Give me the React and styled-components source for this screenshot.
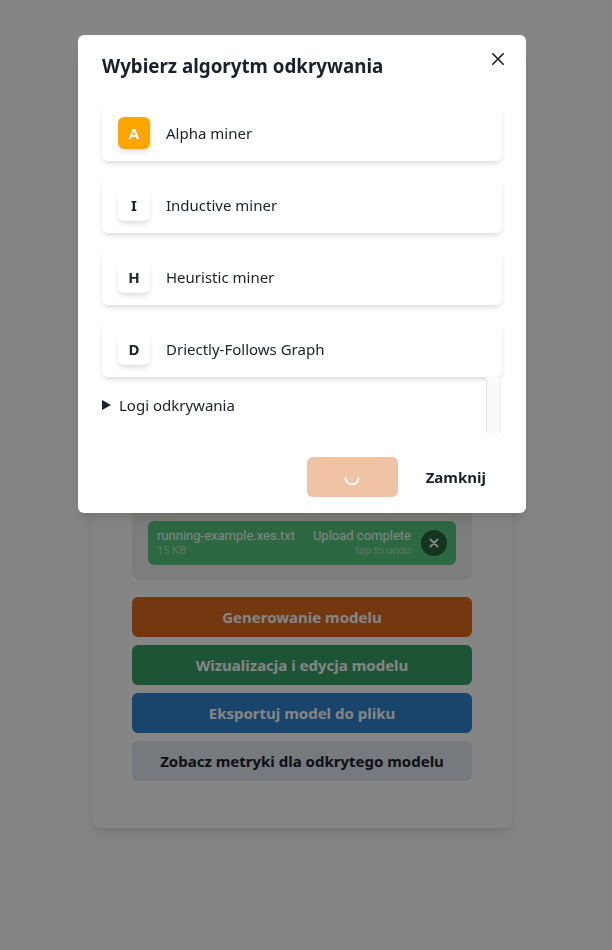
import React from "react";
import styled, { createGlobalStyle } from "styled-components";

const Global = createGlobalStyle`
  html, body { margin: 0; padding: 0; }
  body {
    font-family: "Noto Sans", "Open Sans", sans-serif;
    color: #1a202c;
    background: #ffffff;
  }
  * { box-sizing: border-box; }
`;

/* ---------- background page ---------- */
const Page = styled.div`
  min-height: 950px;
  padding: 380px 8px 0 0;
  display: flex;
  justify-content: center;
  align-items: flex-start;
  background: #ffffff;
`;

const Card = styled.div`
  width: 420px;
  padding: 40px 40px 47px;
  background: #ffffff;
  border-radius: 8px;
  box-shadow: 0 10px 15px -3px rgba(0, 0, 0, 0.1), 0 4px 6px -2px rgba(0, 0, 0, 0.05);
  display: flex;
  flex-direction: column;
`;

const UploadPanel = styled.div`
  background: #f1f0ef;
  border-radius: 8px;
  padding: 16px 16px 15px;
  display: flex;
  flex-direction: column;
`;

const DropLabel = styled.div`
  height: 85px;
  display: flex;
  align-items: center;
  justify-content: center;
  font-size: 14px;
  color: #4f4f4f;
`;

const FileItem = styled.div`
  height: 44px;
  background: #55c87f;
  border-radius: 6px;
  color: #ffffff;
  display: flex;
  align-items: center;
  padding: 0 9px;
  gap: 10px;
  font-family: Roboto, "Noto Sans", sans-serif;
`;

const FileInfo = styled.div`
  flex: ${(p) => (p.$right ? "none" : "1")};
  min-width: 0;
  display: flex;
  flex-direction: column;
  align-items: ${(p) => (p.$right ? "flex-end" : "flex-start")};
  line-height: 1.15;
  white-space: nowrap;
`;

const FileMain = styled.span`
  font-size: 13px;
`;

const FileSub = styled.span`
  font-size: 11px;
  opacity: 0.5;
  margin-top: 1px;
`;

const UndoCircle = styled.div`
  width: 26px;
  height: 26px;
  border-radius: 50%;
  background: rgba(0, 0, 0, 0.5);
  display: flex;
  align-items: center;
  justify-content: center;
  flex: none;
`;

const ButtonStack = styled.div`
  margin-top: 17px;
  display: flex;
  flex-direction: column;
  gap: 8px;
`;

const PageButton = styled.button`
  height: 40px;
  border: none;
  border-radius: 6px;
  font-family: "Noto Sans", sans-serif;
  font-weight: 700;
  font-size: 15px;
  background: ${(p) => p.$bg};
  color: ${(p) => p.$fg || "#ffffff"};
  cursor: pointer;
`;

/* ---------- modal ---------- */
const Overlay = styled.div`
  position: fixed;
  inset: 0;
  background: rgba(0, 0, 0, 0.48);
`;

const ModalLayer = styled.div`
  position: fixed;
  inset: 0;
  padding: 35px 8px 0 0;
  display: flex;
  justify-content: center;
  align-items: flex-start;
`;

const Modal = styled.section`
  position: relative;
  width: 448px;
  background: #ffffff;
  border-radius: 6px;
  box-shadow: 0 10px 15px -3px rgba(0, 0, 0, 0.1), 0 4px 6px -2px rgba(0, 0, 0, 0.05);
`;

const Header = styled.header`
  padding: 16px 24px;
  font-size: 18.75px;
  font-weight: 700;
  line-height: 30px;
  color: #1a202c;
`;

const CloseButton = styled.button`
  position: absolute;
  top: 8px;
  right: 12px;
  width: 32px;
  height: 32px;
  border: none;
  background: transparent;
  border-radius: 6px;
  display: flex;
  align-items: center;
  justify-content: center;
  padding: 0;
  color: #1a202c;
`;

const Body = styled.div`
  padding: 8px 24px;
`;

const List = styled.div`
  display: flex;
  flex-direction: column;
  gap: 16px;
`;

const AlgoCard = styled.div`
  height: 56px;
  padding: 0 16px;
  display: flex;
  align-items: center;
  gap: 16px;
  background: #ffffff;
  border-radius: 6px;
  box-shadow: 0 4px 6px -1px rgba(0, 0, 0, 0.1), 0 2px 4px -1px rgba(0, 0, 0, 0.06);
  font-size: 15px;
  color: #1a202c;
  cursor: pointer;
`;

const Badge = styled.div`
  width: 32px;
  height: 32px;
  border-radius: 6px;
  flex: none;
  display: flex;
  align-items: center;
  justify-content: center;
  font-weight: 700;
  font-size: 15px;
  background: ${(p) => (p.$active ? "#ffa500" : "#ffffff")};
  color: ${(p) => (p.$active ? "#ffffff" : "#1a202c")};
  box-shadow: 0 4px 6px -1px rgba(0, 0, 0, 0.1), 0 2px 4px -1px rgba(0, 0, 0, 0.06);
`;

const LogsRow = styled.div`
  height: 56px;
  display: flex;
  align-items: center;
  justify-content: space-between;
`;

const Summary = styled.div`
  display: flex;
  align-items: center;
  gap: 8px;
  font-size: 15px;
  color: #1a202c;
`;

const Triangle = styled.span`
  width: 0;
  height: 0;
  border-top: 5px solid transparent;
  border-bottom: 5px solid transparent;
  border-left: 9px solid #1a202c;
`;

const Track = styled.div`
  align-self: stretch;
  width: 15px;
  margin-right: 1px;
  background: #fafafa;
  border-left: 1px solid #e8e8e8;
  border-right: 1px solid #ececec;
`;

const Footer = styled.footer`
  padding: 16px 24px;
  display: flex;
  justify-content: flex-end;
  gap: 12px;
`;

const LoadingButton = styled.button`
  width: 91px;
  height: 40px;
  border: none;
  border-radius: 6px;
  background: #dd6b20;
  opacity: 0.4;
  display: flex;
  align-items: center;
  justify-content: center;
  padding: 0;
`;

const GhostButton = styled.button`
  height: 40px;
  padding: 0 16px;
  border: none;
  border-radius: 6px;
  background: transparent;
  font-family: "Noto Sans", sans-serif;
  font-weight: 700;
  font-size: 15px;
  color: #1a202c;
`;

const algos = [
  { letter: "A", name: "Alpha miner", active: true },
  { letter: "I", name: "Inductive miner" },
  { letter: "H", name: "Heuristic miner" },
  { letter: "D", name: "Driectly-Follows Graph" },
];

export default function App() {
  return (
    <>
      <Global />
      <Page>
        <Card>
          <UploadPanel>
            <DropLabel>Przeciągnij i upuść plik lub Przeglądaj</DropLabel>
            <FileItem>
              <FileInfo>
                <FileMain>running-example.xes.txt</FileMain>
                <FileSub>15 KB</FileSub>
              </FileInfo>
              <FileInfo $right>
                <FileMain>Upload complete</FileMain>
                <FileSub>tap to undo</FileSub>
              </FileInfo>
              <UndoCircle>
                <svg width="10" height="10" viewBox="0 0 10 10">
                  <path d="M1.5 1.5 L8.5 8.5 M8.5 1.5 L1.5 8.5" stroke="#fff" strokeWidth="2" strokeLinecap="round" />
                </svg>
              </UndoCircle>
            </FileItem>
          </UploadPanel>
          <ButtonStack>
            <PageButton $bg="#dd6b20">Generowanie modelu</PageButton>
            <PageButton $bg="#38a169">Wizualizacja i edycja modelu</PageButton>
            <PageButton $bg="#3182ce">Eksportuj model do pliku</PageButton>
            <PageButton $bg="#e2e8f0" $fg="#1a202c">Zobacz metryki dla odkrytego modelu</PageButton>
          </ButtonStack>
        </Card>
      </Page>
      <Overlay />
      <ModalLayer>
        <Modal>
          <Header>Wybierz algorytm odkrywania</Header>
          <CloseButton aria-label="Zamknij">
            <svg width="12" height="12" viewBox="0 0 12 12">
              <path d="M0.75 0.75 L11.25 11.25 M11.25 0.75 L0.75 11.25" stroke="#1a202c" strokeWidth="1.6" strokeLinecap="round" />
            </svg>
          </CloseButton>
          <Body>
            <List>
              {algos.map((a) => (
                <AlgoCard key={a.letter}>
                  <Badge $active={a.active}>{a.letter}</Badge>
                  <span>{a.name}</span>
                </AlgoCard>
              ))}
            </List>
            <LogsRow>
              <Summary>
                <Triangle />
                Logi odkrywania
              </Summary>
              <Track />
            </LogsRow>
          </Body>
          <Footer>
            <LoadingButton aria-label="Ładowanie">
              <svg width="16" height="16" viewBox="0 0 16 16">
                <path d="M1.5 9 A6.5 6.5 0 0 0 14.5 9" fill="none" stroke="#fff" strokeWidth="2" strokeLinecap="round" />
              </svg>
            </LoadingButton>
            <GhostButton>Zamknij</GhostButton>
          </Footer>
        </Modal>
      </ModalLayer>
    </>
  );
}
